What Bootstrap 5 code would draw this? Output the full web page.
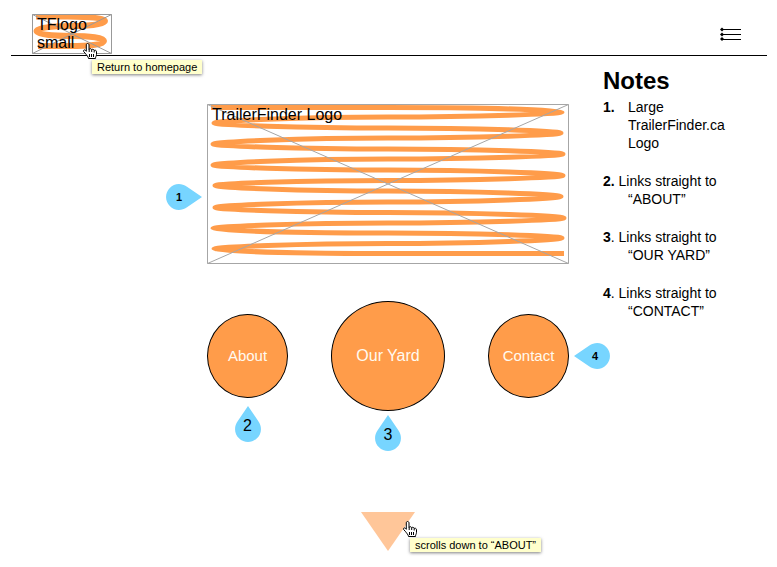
<!DOCTYPE html>
<html lang="en">
<head>
<meta charset="utf-8">
<meta name="viewport" content="width=device-width, initial-scale=1">
<title>TrailerFinder home wireframe</title>
<link href="https://cdn.jsdelivr.net/npm/bootstrap@5.3.0/dist/css/bootstrap.min.css" rel="stylesheet">
<style>
  body { font-family: "Liberation Sans", Arial, sans-serif; color: #000; background: #fff; font-size: 14px; line-height: 18px; }
  .page { padding: 0 10px 10px 11px; }
  .topbar { border-bottom: 1px solid #000; padding: 14px 25px 1px 21px; }
  .logo-text { font-size: 16px; line-height: 18px; color: #000; }
  .small-logo { width: 80px; height: 40px; padding: 2px 5px; }
  .large-logo { height: 160px; padding: 2px 5px; }
  .scribble { position: absolute; inset: 0; width: 100%; height: 100%; }
  .menu-btn { line-height: 0; }
  .board { gap: 34px; padding-top: 12px; }
  .stage { flex: 0 0 362px; padding-top: 36px; }
  .notes { flex: 0 0 164px; padding-right: 24px; }
  .notes h1 { font-size: 24px; line-height: 26px; font-weight: 700; margin: 0 0 4px; }
  .notes li { padding-left: 25px; text-indent: -25px; margin-bottom: 20px; }
  .wide-num { display: inline-block; width: 25px; text-indent: 0; }
  .circles { margin-top: 37px; }
  .circle { width: 81px; height: 84px; border: 1px solid #000; border-radius: 50%; background: #ff9c4a; color: #fffaf0; font-size: 15px; text-decoration: none; }
  .circle:hover { color: #fff; }
  .circle-lg { width: 114px; height: 110px; font-size: 16px; }
  .pin { position: absolute; width: 26px; height: 36px; font-size: 16px; line-height: 18px; text-align: center; padding-top: 11px; }
  .pin-side { width: 36px; height: 26px; font-size: 11px; line-height: 26px; font-weight: 700; padding: 0; }
  .pin svg { position: absolute; inset: 0; }
  .pin-below { top: 100%; left: 50%; transform: translateX(-50%); margin-top: 8px; }
  .circle-lg-wrap .pin-below { margin-top: 4px; }
  .pin-left { right: 100%; top: 50%; margin-right: 5px; padding-right: 10px; }
  .pin-right { left: 100%; top: 50%; margin-left: 5px; transform: translateY(-50%); padding-left: 6px; }
  .scroll-btn { margin-top: 101px; line-height: 0; }
  .hand { position: absolute; z-index: 3; }
  .tip { position: absolute; z-index: 2; background: #ffffcc; font-size: 11px; line-height: 14px; padding: 0 5px; white-space: nowrap; box-shadow: 0 1px 3px rgba(0,0,0,.5); }
  .small-logo .hand { left: 50px; top: 28px; }
  .small-logo .tip { left: 60px; top: 46px; }
  .scroll-btn .hand { left: 41px; top: 8px; }
  .scroll-btn .tip { left: 49px; top: 26px; }
</style>
<script src="https://cdn.jsdelivr.net/npm/bootstrap@5.3.0/dist/js/bootstrap.bundle.min.js" defer></script>
</head>
<body>
<svg width="0" height="0" class="position-absolute" aria-hidden="true">
  <symbol id="hand" viewBox="0 0 16 18">
    <path d="M5.5 1.5C6.300 1.500 7 2 7 3V7.300C7.300 6.400 9.300 6.400 9.600 7.700C10 7 11.900 7.100 12.200 8.500C12.800 7.900 14.500 8.200 14.500 9.800V12.500C14.500 14 13.500 14.500 13.500 16.500H6.500C6.300 14.500 4.500 13.200 3.700 11.800L1.600 9.500C1 8.200 2.400 7.300 3.500 8.300L4.300 9.300V3C4.300 2 4.800 1.500 5.500 1.500Z" fill="#fff" stroke="#000" stroke-linejoin="round"/>
    <path d="M7.2 7V10M9.700 8V10M12.200 8.500V10.500M7.500 12V15M9.500 12V15M11.500 12V15" stroke="#000" fill="none"/>
  </symbol>
  <symbol id="drop" viewBox="0 0 26 36">
    <path d="M13 0L23.2 15C27.500 21 26.500 28 22 32.200C17 37.200 9 37.200 4 32.200C-.5 28-1.500 21 2.800 15Z" fill="#77d5ff"/>
  </symbol>
</svg>

<div class="page">
  <header class="topbar d-flex justify-content-between align-items-center">
    <a href="#" class="small-logo logo-text position-relative d-block text-decoration-none" aria-label="Return to homepage">
      <svg class="scribble" viewBox="0 0 80 40" preserveAspectRatio="none" aria-hidden="true">
        <path d="M4 2.500H36C55 3 73 3.500 73 7C73 10 58 12 39 12C20 12 4.500 13.500 4.500 17C4.500 20.500 20 22 39 22C58 22 72 23.500 72 27C72 31 55 32 38 32H6" fill="none" stroke="#ff9c4a" stroke-width="6"/>
        <path d="M.5.5H79.500V39.500H.5ZM.5.5L79.500 39.500M79.500.5L.5 39.500" fill="none" stroke="#999"/>
      </svg>
      <span class="position-relative">TFlogo<br>small</span>
      <svg class="hand" width="16" height="18" aria-hidden="true"><use href="#hand"/></svg>
      <span class="tip text-black">Return to homepage</span>
    </a>
    <button type="button" class="menu-btn btn p-0 border-0 rounded-0" aria-label="Menu">
      <svg width="22" height="14" viewBox="0 0 22 14" aria-hidden="true">
        <path d="M3 2.500H21M3 7.500H21M3 12.500H21" stroke="#000"/>
        <path d="M2 .5L4 2.500L2 4.500L0 2.500ZM2 5.500L4 7.500L2 9.500L0 7.500ZM2 10L4 12L2 14L0 12Z"/>
      </svg>
    </button>
  </header>

  <div class="board d-flex justify-content-end">
    <main class="stage">
      <div class="large-logo logo-text position-relative">
        <svg class="scribble" viewBox="0 0 362 160" preserveAspectRatio="none" aria-hidden="true">
          <path d="M4 3.500H181C270 3.500 355 6 355 8S270 13 181 13
            S7 17 7 19S92 24 181 24S354 27 354 29S270 34 181 34
            S6 38 6 40S92 45 181 45S356 48 356 50S270 55 181 55
            S6 59 6 61S92 66 181 66S356 69.500 356 71.500S270 76.500 181 76.500
            S8 79.500 8 81.500S92 87 181 87S354 90.500 354 92.500S270 98 181 98
            S8 101.500 8 103.500S92 108.500 181 108.500S357 112 357 114S270 119 181 119
            S6 122.500 6 124.500S92 129 181 129S355 132 355 134S270 139.500 181 139.500
            S7 143 7 145S92 149.500 181 149.500H357" fill="none" stroke="#ff9c4a" stroke-width="5" stroke-linejoin="round"/>
          <path d="M.5.5H361.500V159.500H.5ZM.5.5L361.500 159.500M361.500.5L.5 159.500" fill="none" stroke="#a6a6a6"/>
        </svg>
        <span class="position-relative">TrailerFinder Logo</span>
        <span class="pin pin-side pin-left"><svg width="36" height="26" viewBox="0 0 36 26" aria-hidden="true"><path d="M36 13L21 2.800C15-1.500 8-.5 3.800 4C-1.200 9-1.200 17 3.800 22C8 26.500 15 27.500 21 23.200Z" fill="#77d5ff"/></svg><span class="position-relative">1</span></span>
      </div>

      <nav class="circles d-flex justify-content-between align-items-center" aria-label="Sections">
        <div class="position-relative">
          <a href="#about" class="circle d-flex align-items-center justify-content-center">About</a>
          <span class="pin pin-below"><svg width="26" height="36" aria-hidden="true"><use href="#drop"/></svg><span class="position-relative">2</span></span>
        </div>
        <div class="position-relative circle-lg-wrap">
          <a href="#yard" class="circle circle-lg d-flex align-items-center justify-content-center">Our Yard</a>
          <span class="pin pin-below"><svg width="26" height="36" aria-hidden="true"><use href="#drop"/></svg><span class="position-relative">3</span></span>
        </div>
        <div class="position-relative">
          <a href="#contact" class="circle d-flex align-items-center justify-content-center">Contact</a>
          <span class="pin pin-side pin-right"><svg width="36" height="26" viewBox="0 0 36 26" aria-hidden="true"><path d="M0 13L15 2.800C21-1.500 28-.5 32.200 4C37.200 9 37.200 17 32.200 22C28 26.500 21 27.500 15 23.200Z" fill="#77d5ff"/></svg><span class="position-relative">4</span></span>
        </div>
      </nav>

      <div class="text-center">
        <button type="button" class="scroll-btn btn p-0 border-0 rounded-0 position-relative" aria-label="Scroll down to About">
          <svg width="54" height="39" viewBox="0 0 54 39" aria-hidden="true"><path d="M0 0H54L27 39Z" fill="#ffc699"/></svg>
          <svg class="hand" width="16" height="18" aria-hidden="true"><use href="#hand"/></svg>
          <span class="tip text-black">scrolls down to “ABOUT”</span>
        </button>
      </div>
    </main>

    <aside class="notes">
      <h1>Notes</h1>
      <ul class="list-unstyled mb-0">
        <li><b class="wide-num">1.</b>Large TrailerFinder.ca Logo</li>
        <li><b>2.</b> Links straight to “ABOUT”</li>
        <li><b>3</b>. Links straight to “OUR YARD”</li>
        <li><b>4</b>. Links straight to “CONTACT”</li>
      </ul>
    </aside>
  </div>
</div>
</body>
</html>
